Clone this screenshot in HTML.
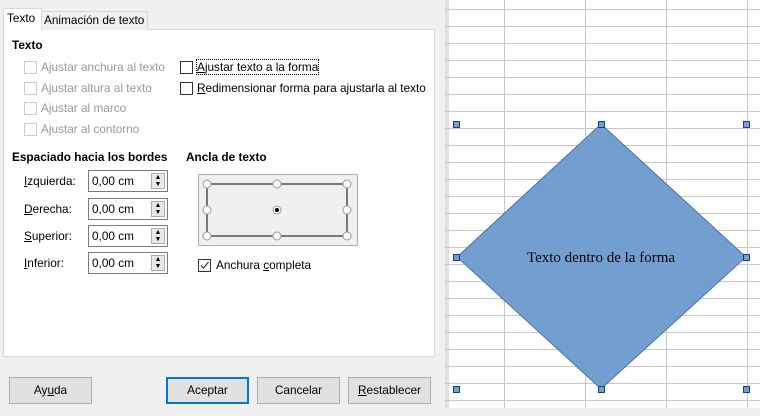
<!DOCTYPE html><html><head><style>
*{margin:0;padding:0;box-sizing:border-box}
body{width:760px;height:416px;position:relative;overflow:hidden;background:#f0f0f0;font-family:"Liberation Sans",sans-serif;font-size:11.8px;color:#000}
.a{position:absolute;white-space:nowrap}
.cb{position:absolute;width:13px;height:13px;border:1px solid #333;background:#fff}
.cb.d{border-color:#ccc}
.g{color:#999}
.b{font-weight:bold}
.sp{position:absolute;width:80px;height:22px;border:1px solid #7a7a7a;background:#fff;padding:3px 0 0 3px}
.sb{position:absolute;right:2px;top:2px;width:14px;height:16px;border:1px solid #adadad;background:#e8e8e8;font-size:7px;line-height:7px;text-align:center;color:#000}
.btn{position:absolute;top:377px;width:83px;height:27px;border:1px solid #adadad;background:#e1e1e1;text-align:center;line-height:25px}
</style></head><body>
<div class="a" style="left:3px;top:29px;width:432px;height:328px;background:#fff;border:1px solid #d9d9d9"></div>
<div class="a" style="left:3px;top:8px;width:39px;height:22px;background:#fff;border:1px solid #d9d9d9;border-bottom:none;padding:2px 0 0 3px">Texto</div>
<div class="a" style="left:41px;top:11px;width:107px;height:19px;background:#f0f0f0;border:1px solid #d9d9d9;border-bottom:none;padding:1px 0 0 2px">Animación de texto</div>
<div class="a b" style="left:12px;top:38px">Texto</div>
<div class="cb d" style="left:24px;top:61px"></div><div class="a g" style="left:41px;top:60px">Ajustar anchura al texto</div>
<div class="cb d" style="left:24px;top:82px"></div><div class="a g" style="left:41px;top:81px">Ajustar altura al texto</div>
<div class="cb d" style="left:24px;top:102px"></div><div class="a g" style="left:41px;top:101px">Ajustar al marco</div>
<div class="cb d" style="left:24px;top:123px"></div><div class="a g" style="left:41px;top:122px">Ajustar al contorno</div>
<div class="cb" style="left:180px;top:61px"></div><div class="a" style="left:197px;top:60px;outline:1px dotted #000"><u>A</u>justar texto a la forma</div>
<div class="cb" style="left:180px;top:82px"></div><div class="a" style="left:197px;top:81px"><u>R</u>edimensionar forma para ajustarla al texto</div>
<div class="a b" style="left:12px;top:150px">Espaciado hacia los bordes</div>
<div class="a b" style="left:186px;top:150px">Ancla de texto</div>
<div class="a" style="left:24px;top:174px"><u>I</u>zquierda:</div>
<div class="a" style="left:24px;top:202px"><u>D</u>erecha:</div>
<div class="a" style="left:24px;top:229px"><u>S</u>uperior:</div>
<div class="a" style="left:24px;top:256px"><u>I</u>nferior:</div>
<div class="sp" style="left:88px;top:170px">0,00 cm<div class="sb">▲<br>▼</div></div>
<div class="sp" style="left:88px;top:198px">0,00 cm<div class="sb">▲<br>▼</div></div>
<div class="sp" style="left:88px;top:225px">0,00 cm<div class="sb">▲<br>▼</div></div>
<div class="sp" style="left:88px;top:252px">0,00 cm<div class="sb">▲<br>▼</div></div>
<svg class="a" style="left:198px;top:174px" width="160" height="72">
<rect x="0.5" y="0.5" width="159" height="71" fill="#f0f0f0" stroke="#adadad"/>
<path d="M9 10H149V62H9Z" fill="none" stroke="#000"/>
<g fill="#fff" stroke="#999">
<circle cx="9" cy="10" r="4"/><circle cx="79" cy="10" r="4"/><circle cx="149" cy="10" r="4"/>
<circle cx="9" cy="36" r="4"/><circle cx="79" cy="36" r="4"/><circle cx="149" cy="36" r="4"/>
<circle cx="9" cy="62" r="4"/><circle cx="79" cy="62" r="4"/><circle cx="149" cy="62" r="4"/></g>
<circle cx="79" cy="36" r="2" fill="#000"/>
</svg>
<div class="cb" style="left:198px;top:259px;border-color:#333"><svg width="11" height="11" style="position:absolute;left:0;top:0"><path d="M2 5.5L4.5 8L9.5 2" fill="none" stroke="#333" stroke-width="1.2"/></svg></div>
<div class="a" style="left:216px;top:258px">Anchura <u>c</u>ompleta</div>
<div class="btn" style="left:9px">Ay<u>u</u>da</div>
<div class="btn" style="left:166px;border:2px solid #0078d7;line-height:23px">Aceptar</div>
<div class="btn" style="left:257px">Cancelar</div>
<div class="btn" style="left:348px"><u>R</u>establecer</div>
<svg class="a" style="left:445px;top:0" width="315" height="416">
<rect width="315" height="416" fill="#fff"/>
<rect x="0" y="0" width="4" height="416" fill="#e0e0e0"/>
<g stroke="#c8c8c8" stroke-width="1">
<path d="M0 9.5H315M0 26.5H315M0 43.5H315M0 60.5H315M0 77.5H315M0 94.5H315M0 111.5H315M0 128.5H315M0 145.5H315M0 162.5H315M0 179.5H315M0 196.5H315M0 213.5H315M0 230.5H315M0 247.5H315M0 264.5H315M0 281.5H315M0 298.5H315M0 315.5H315M0 332.5H315M0 349.5H315M0 366.5H315M0 383.5H315M0 400.5H315"/>
<path d="M59.5 0V408M140.5 0V408M221.5 0V408M302.5 0V408"/></g>
<rect x="0" y="408" width="315" height="8" fill="#f0f0f0"/>
<polygon points="156,124 301,257 156,389 12,257" fill="#729fcf" stroke="#3465a4" stroke-width="0.8"/>
<text x="156" y="262" text-anchor="middle" font-family="Liberation Serif,serif" font-size="15">Texto dentro de la forma</text>
<g fill="#729fcf" stroke="#1c3f7a">
<rect x="8.5" y="121.5" width="6" height="6"/><rect x="153.5" y="121.5" width="6" height="6"/><rect x="298.5" y="121.5" width="6" height="6"/>
<rect x="8.5" y="254.5" width="6" height="6"/><rect x="298.5" y="254.5" width="6" height="6"/>
<rect x="8.5" y="386.5" width="6" height="6"/><rect x="153.5" y="386.5" width="6" height="6"/><rect x="298.5" y="386.5" width="6" height="6"/></g>
</svg>
</body></html>
